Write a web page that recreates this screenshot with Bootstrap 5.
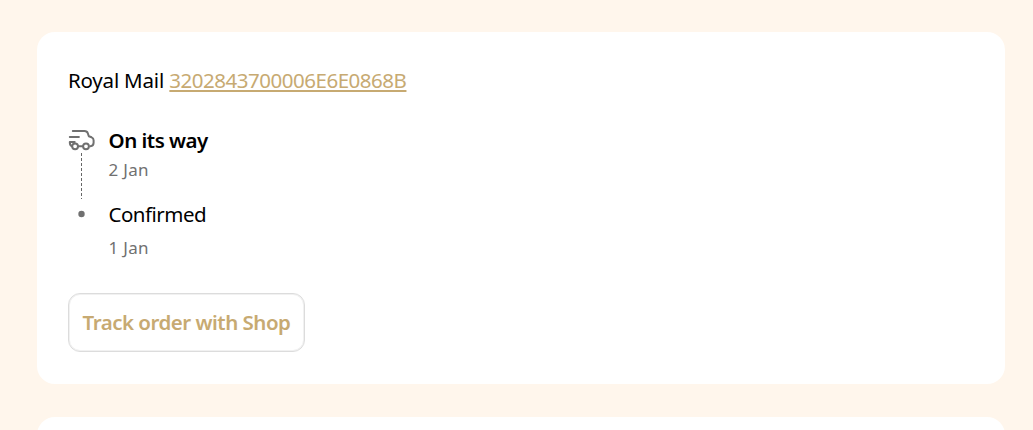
<!DOCTYPE html>
<html lang="en">
<head>
    <meta charset="UTF-8">
    <meta name="viewport" content="width=device-width, initial-scale=1.0">
    <title>Order Tracking</title>
    <link href="https://cdn.jsdelivr.net/npm/bootstrap@5.3.0/dist/css/bootstrap.min.css" rel="stylesheet">
    <style>
        body {
            background-color: #fff6ec;
            color: #000;
            font-family: "Noto Sans", "Open Sans", sans-serif;
            font-size: 20.5px;
            line-height: 30px;
            padding: 32px 28px 0 37px;
        }
        .order-card {
            border: 0;
            border-radius: 18px;
            padding: 33px 31px 32px;
            height: 352px;
        }
        .next-wrap {
            margin-top: 33px;
            height: 13px;
        }
        .next-card {
            height: 36px;
            padding: 0;
        }
        .carrier {
            letter-spacing: -0.2px;
        }
        .tracking-link, .tracking-link:hover {
            color: #c7aa72;
            letter-spacing: -0.48px;
            text-decoration-thickness: 2px;
            text-underline-offset: 2px;
        }
        .timeline {
            margin-top: 30px;
        }
        .step-icon {
            width: 28px;
            margin-right: 12.5px;
        }
        .step-line {
            width: 1px;
            height: 46px;
            margin-left: 13px;
            background: repeating-linear-gradient(#666 0 3px, transparent 3px 5px);
        }
        .step-title {
            letter-spacing: -0.5px;
        }
        .step-date {
            color: #707070;
            font-size: 17px;
            letter-spacing: 0.3px;
        }
        .btn-track, .btn-track:hover {
            color: #c7aa72;
            border: 1px solid #dcdcdc;
            box-shadow: inset 0 0 0 1px #f1f1f1;
            border-radius: 12px;
            width: 237px;
            height: 59px;
            padding: 0;
            font-size: 20.5px;
            font-weight: 600;
            letter-spacing: -0.5px;
            margin-top: 30px;
        }
    </style>
</head>
<body>
    <div class="card order-card">
        <div><span class="carrier">Royal Mail</span> <a href="#" class="tracking-link">3202843700006E6E0868B</a></div>

        <div class="timeline">
            <div class="d-flex">
                <div class="step-icon d-flex flex-column">
                    <svg width="28" height="28" viewBox="0 0 28 28" fill="none" stroke="#707070" stroke-width="2" stroke-linecap="round" stroke-linejoin="round">
                        <path d="M4.8 6h11.7c1.7 0 2.8.7 3.3 2.2l1 3 2.8 1.1c1.4.6 2 1.5 2 2.9v2.6c0 1.9-.9 3.3-3.2 3.5"/>
                        <path d="M1.8 12h9.1M1.8 17h4.9M1.8 17c0 2.2.6 3.8 2.1 4.3M10.2 21.3h4.6"/>
                        <circle cx="7.1" cy="21.3" r="2.9"/>
                        <circle cx="18" cy="21.3" r="2.9"/>
                    </svg>
                    <div class="step-line"></div>
                </div>
                <div>
                    <div class="step-title fw-semibold">On its way</div>
                    <div class="step-date">2 Jan</div>
                </div>
            </div>
            <div class="d-flex">
                <div class="step-icon d-flex justify-content-center">
                    <svg width="28" height="30" viewBox="0 0 28 30">
                        <circle cx="13.5" cy="15" r="3.2" fill="#707070"/>
                    </svg>
                </div>
                <div>
                    <div class="step-title">Confirmed</div>
                    <div class="step-date mt-1">1 Jan</div>
                </div>
            </div>
        </div>

        <button type="button" class="btn btn-track">Track order with Shop</button>
    </div>

    <div class="next-wrap overflow-hidden">
        <div class="card order-card next-card"></div>
    </div>

    <script src="https://cdn.jsdelivr.net/npm/bootstrap@5.3.0/dist/js/bootstrap.bundle.min.js"></script>
</body>
</html>
